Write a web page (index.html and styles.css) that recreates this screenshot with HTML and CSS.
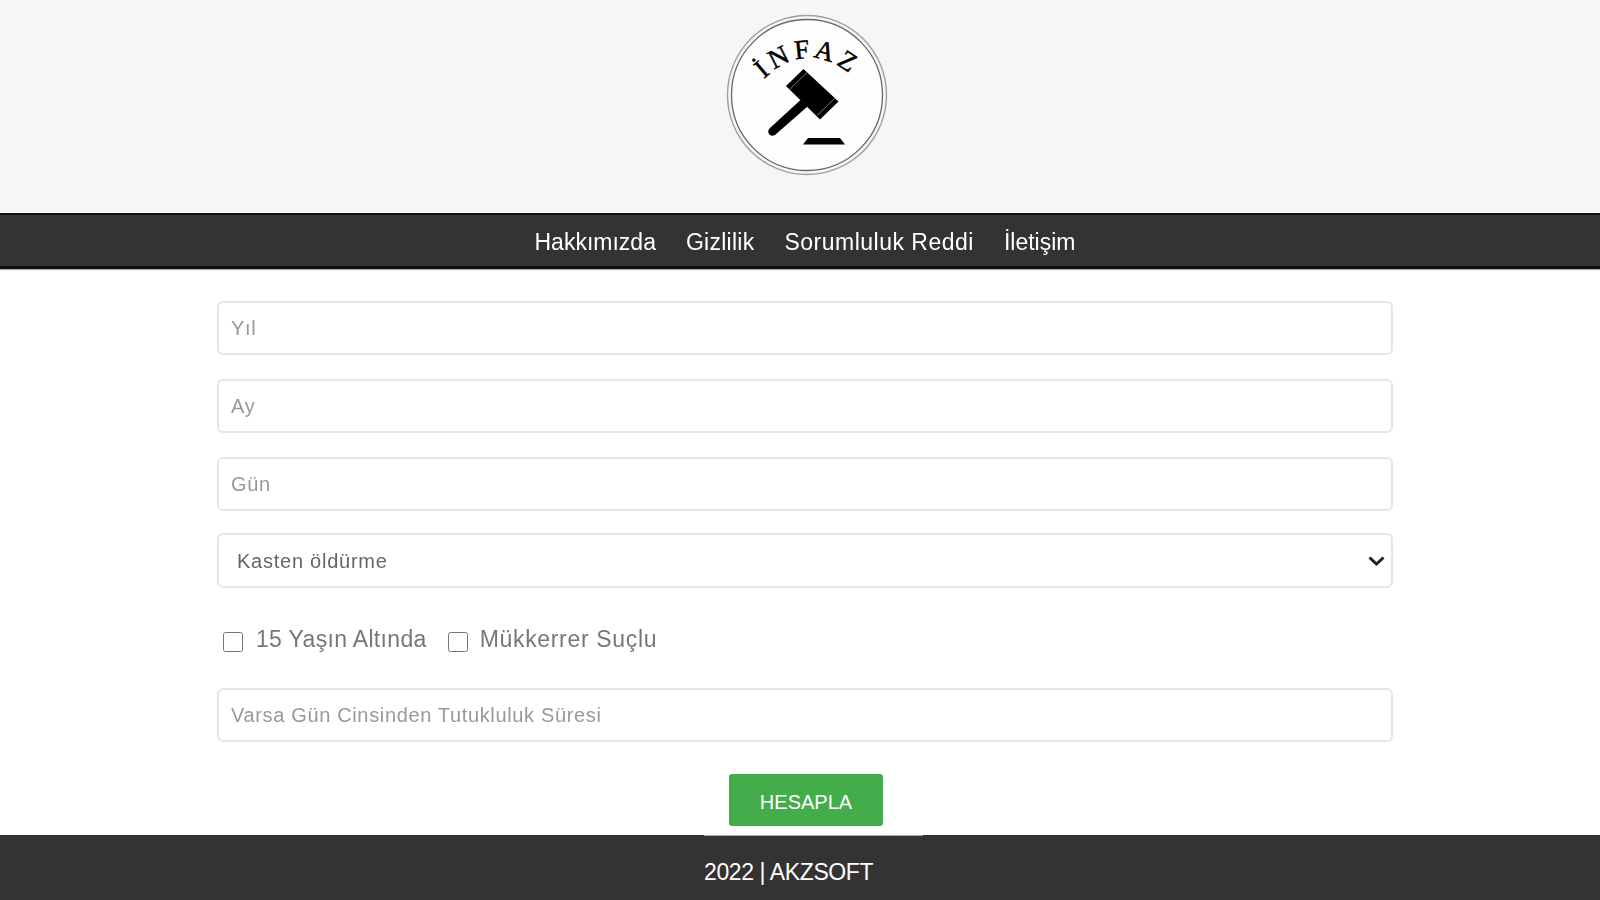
FILE: index.html
```html
<!DOCTYPE html>
<html lang="tr">
<head>
<meta charset="utf-8">
<title>İnfaz</title>
<link rel="stylesheet" href="styles.css">
</head>
<body>
<div class="page">
  <header class="masthead">
    <svg class="logo" width="162" height="162" viewBox="726 14 162 162">
      <circle cx="807" cy="95" r="79.5" fill="none" stroke="#a0a0a0" stroke-width="1.4"/>
      <circle cx="807" cy="95" r="75.5" fill="#fdfdfd" stroke="#666" stroke-width="1.3"/>
      <path id="arc" d="M752 92 Q806 26 866 88" fill="none"/>
      <text class="logo-text"><textPath href="#arc" startOffset="50%" text-anchor="middle">İNFAZ</textPath></text>
      <path d="M803.5 69 L838.5 101.5 L820 119.5 L786 86 Z" fill="#000"/>
      <path d="M807 72.5 L789.6 89.5 M835 98 L816.5 116" stroke="#777" stroke-width="1" fill="none"/>
      <path d="M800.5 100 L807.5 106.5 L775 135 Q771 137 769 134 Q767 131 770 128 Z" fill="#000"/>
      <path d="M808 138 L840 138 L845 144.5 L803 144.5 Z" fill="#000"/>
    </svg>
  </header>
  <nav class="nav">
    <a class="nav-link">Hakkımızda</a>
    <a class="nav-link nav-link-mid">Gizlilik</a>
    <a class="nav-link nav-link-wide">Sorumluluk Reddi</a>
    <a class="nav-link">İletişim</a>
  </nav>
  <main class="form">
    <input class="field" type="text" placeholder="Yıl">
    <input class="field" type="text" placeholder="Ay">
    <input class="field" type="text" placeholder="Gün">
    <select class="field field-select">
      <option>Kasten öldürme</option>
    </select>
    <div class="checks">
      <label class="check"><input class="box" type="checkbox"><span>15 Yaşın Altında</span></label>
      <label class="check check-wide"><input class="box" type="checkbox"><span>Mükkerrer Suçlu</span></label>
    </div>
    <input class="field" type="text" placeholder="Varsa Gün Cinsinden Tutukluluk Süresi">
    <button class="submit" type="button">HESAPLA</button>
  </main>
  <footer class="footer">
    <div class="footer-inner">2022 | AKZSOFT</div>
  </footer>
</div>
</body>
</html>
```
FILE: styles.css
```css
* { box-sizing: border-box; }
html, body { margin: 0; height: 100%; overflow: hidden; }
body { background: #fff; font-family: "Liberation Sans", Arial, sans-serif; }
.page { height: 900px; display: flex; flex-direction: column; filter: blur(0.55px); }
.masthead { height: 213px; background: #f6f6f6; display: flex; justify-content: center; padding: 14px 0 0 14px; }
.logo { display: block; }
.logo-text { font-family: "Liberation Serif", serif; font-size: 27px; letter-spacing: 4.5px; fill: #000; stroke: #000; stroke-width: 0.5px; }
.nav { height: 56px; background: #333; border-top: 2px solid #111; border-bottom: 3px solid #111; box-shadow: 0 1px 1px #aaa; display: flex; justify-content: center; align-items: center; gap: 30px; padding: 4px 0 0 10px; }
.nav-link { color: #fff; font-size: 23px; line-height: 1; }
.nav-link-mid { letter-spacing: 0.25px; }
.nav-link-wide { letter-spacing: 0.5px; }
.form { flex: 1; width: 1176px; margin-left: 217px; padding-top: 32px; display: flex; flex-direction: column; align-items: stretch; }
.field { height: 54px; margin-bottom: 24px; padding: 1px 12px 0; background: #fff; border: 2px solid #e6e6e6; border-radius: 6px; font-family: "Liberation Sans", Arial, sans-serif; font-size: 20px; color: #555; letter-spacing: 0.65px; outline: none; }
.field::placeholder { color: #999; opacity: 1; }
.field-select { height: 55px; margin-top: -2px; margin-bottom: 0; padding: 0 0 0 18px; color: #666; letter-spacing: 0.75px; appearance: none; background-image: url("data:image/svg+xml,%3Csvg xmlns='http://www.w3.org/2000/svg' width='17' height='10'%3E%3Cpath d='M1.5 1.5 L8.5 8 L15.5 1.5' fill='none' stroke='%23222' stroke-width='3'/%3E%3C/svg%3E"); background-repeat: no-repeat; background-position: right 6px center; }
.checks { display: flex; gap: 21px; height: 100px; padding: 22px 0 0 6px; align-items: flex-start; }
.check { display: flex; align-items: flex-start; gap: 13px; color: #777; font-size: 23px; line-height: 30px; letter-spacing: 0.33px; }
.check-wide { letter-spacing: 0.67px; gap: 12px; }
.box { width: 20px; height: 20px; margin: 22px 0 0; }
.check span { margin-top: 14px; }
.submit { align-self: flex-start; margin: 8px 0 0 512px; width: 154px; height: 52px; background: #43ad4b; color: #fff; border: 0; border-radius: 3px; font-family: "Liberation Sans", Arial, sans-serif; font-size: 20px; padding: 5px 0 0; }
.footer { height: 65px; background: #333; flex: none; display: flex; }
.footer-inner { width: 219px; margin-left: 704px; height: 100%; border-top: 1px solid #a8a8a8; color: #fff; font-size: 23px; padding-top: 25px; line-height: 1; letter-spacing: -0.4px; }
```
